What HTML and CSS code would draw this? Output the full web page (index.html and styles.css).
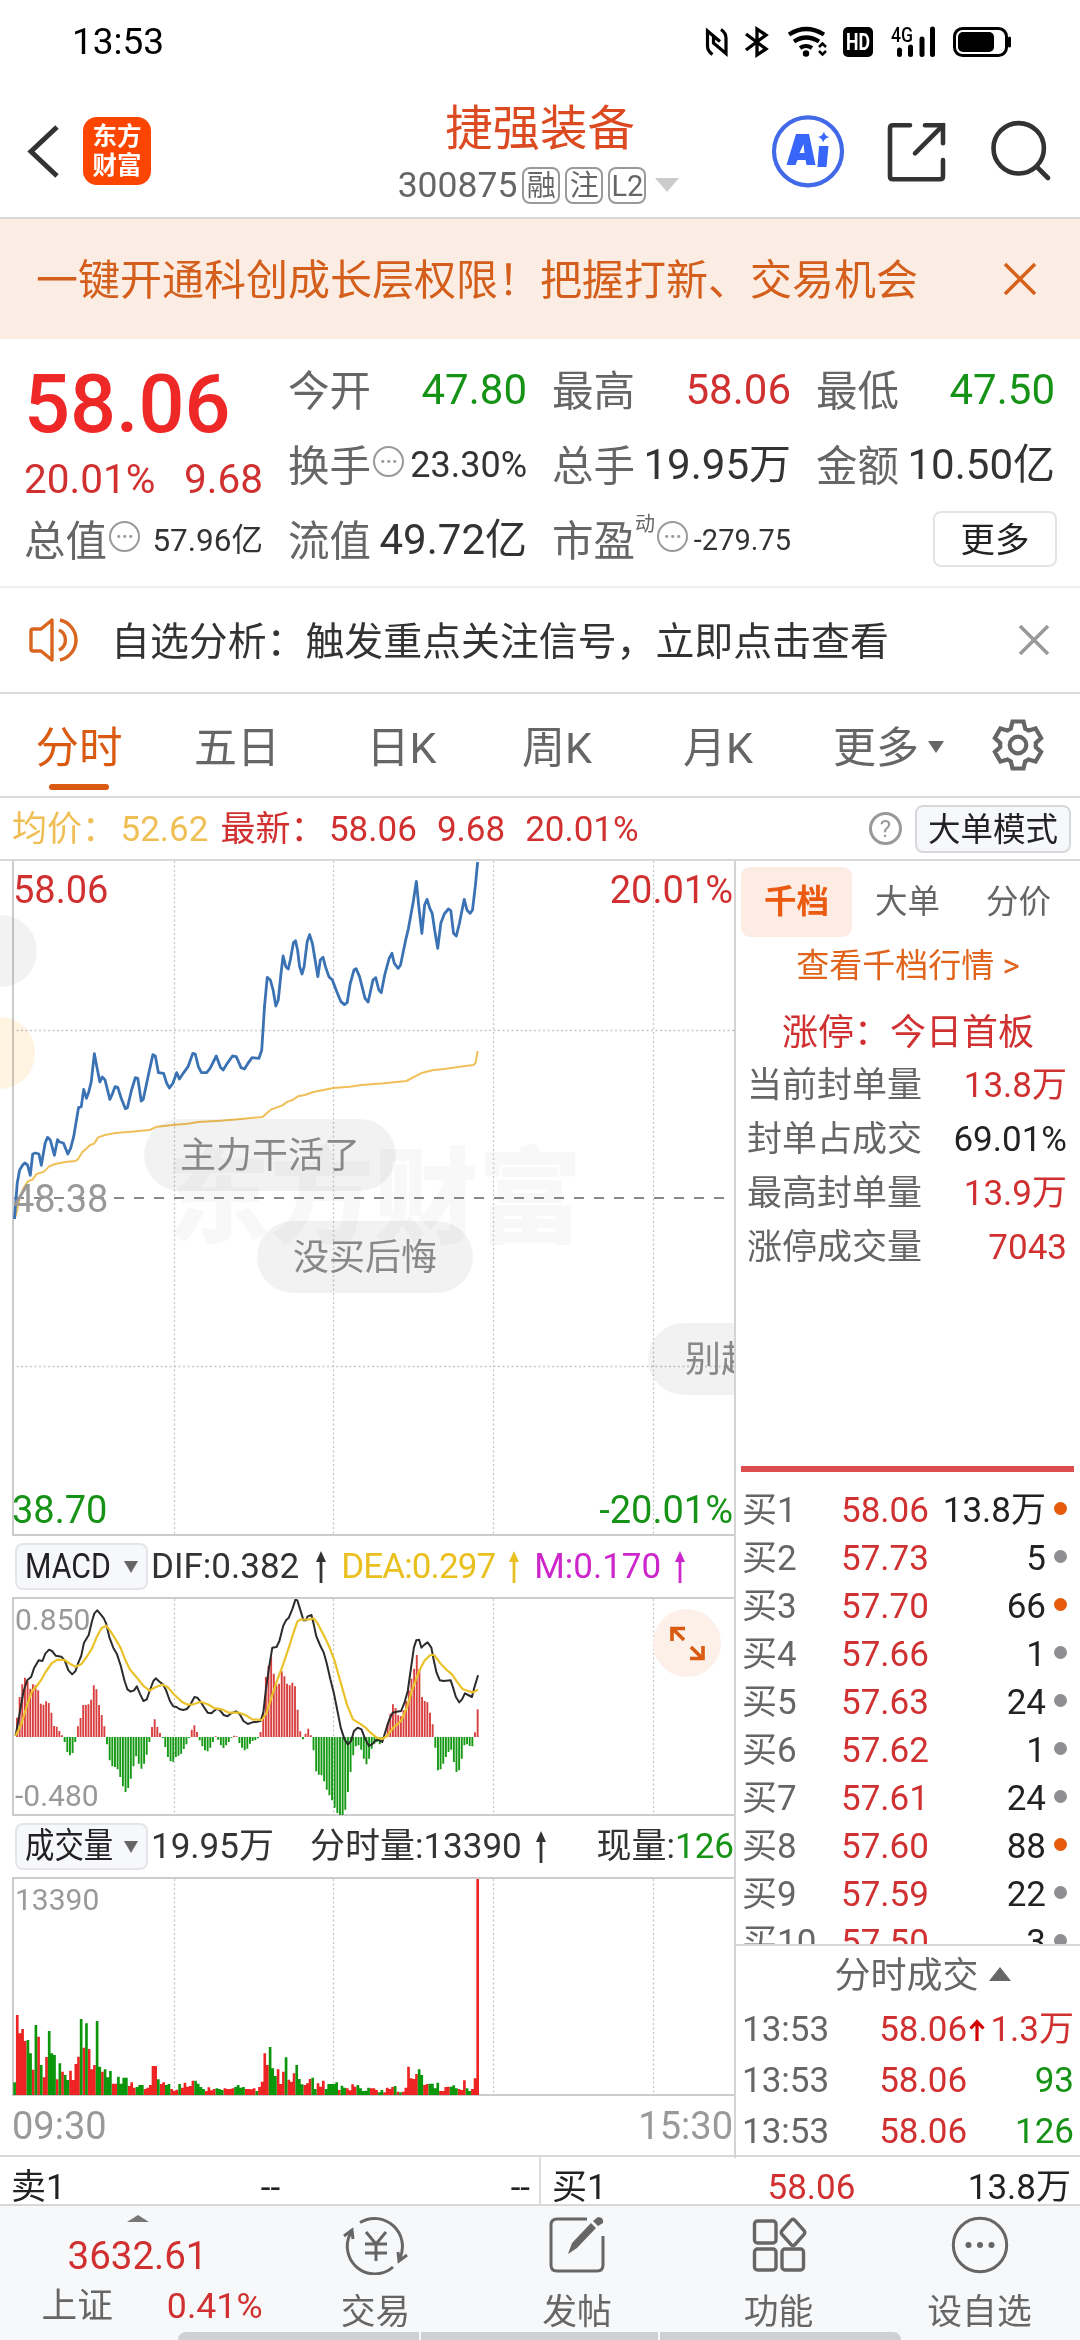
FILE: index.html
```html
<!DOCTYPE html>
<html lang="zh-CN">
<head>
<meta charset="utf-8">
<title>捷强装备 300875</title>
<link rel="stylesheet" href="styles.css">
</head>
<body>
<div class="app">
  <div class="status">
    <span class="clock">13:53</span>
    <svg class="status-icons" width="312" height="40" viewBox="700 22 312 40">
      <g fill="none" stroke="#000" stroke-width="4">
        <path d="M712.500 54.500Q707.500 51 707.500 46V31L720 41.500M721 29.500Q726 33 726 38V53.500L713.500 43V37" stroke-width="3.200"/>
        <path d="M746 34l20 15-9 6V29l9 6-20 15" stroke-width="3.300"/>
        <path d="M789 34.500q17-11 35 0" stroke-width="4.200"/>
        <path d="M794 41.500q12-8 25 0" stroke-width="4.200"/>
        <path d="M800 48q6-4 12 0" stroke-width="4"/>
        <path d="M819 47l3.500-3.500 3.500 3.500M819 51l3.500 3.500 3.500-3.500" stroke-width="2.500"/>
      </g>
      <circle cx="806" cy="53.500" r="3.200"/>
      <rect x="843" y="27" width="30" height="30" rx="5"/>
      <text x="858" y="50" class="hd" textLength="24" lengthAdjust="spacingAndGlyphs">HD</text>
      <text x="891" y="42" class="g4" textLength="22" lengthAdjust="spacingAndGlyphs">4G</text>
      <path d="M899.500 50v4.500M910.500 47v7.500M922 39v15.500M932.500 29v25.500" stroke="#000" stroke-width="5" stroke-linecap="round"/>
      <rect x="954.500" y="28.500" width="52" height="27" rx="8" fill="none" stroke="#000" stroke-width="3"/>
      <rect x="958" y="32" width="36" height="20" rx="5"/>
      <path d="M1009.500 38v8" stroke="#000" stroke-width="3" stroke-linecap="round"/>
    </svg>
  </div>

  <header class="header">
    <div class="head-left">
      <svg width="36" height="60" viewBox="25 121 36 60"><path d="M57 127L31 151.500 57 176" fill="none" stroke="#333" stroke-width="5"/></svg>
      <div class="logo">东方<br>财富</div>
    </div>
    <div class="head-mid">
      <h1 class="name">捷强装备</h1>
      <div class="code">300875<i class="tag">融</i><i class="tag">注</i><i class="tag">L2</i><b class="tri down pale"></b></div>
    </div>
    <svg class="head-right" width="282" height="80" viewBox="750 111 282 80">
      <circle cx="788" cy="151.300" r="34" fill="none" stroke="#4169e8" stroke-width="4.200"/>
      <path d="M776 134h13l6.500 31h-9l-1-5h-8l-2 5h-9zM779.500 153h5l-1-9zM799 146h9.500l-2 21h-9zM804 131.500q1 5 5.500 5.500-5 1-6.500 5.500-1-5-5.500-5.500 5-.5 6.500-5.500z" fill="#3866fb"/>
      <g fill="none" stroke="#333" stroke-width="4.600" stroke-linecap="round">
        <path d="M890 125.300h-17q-3 0-3 3v48q0 3 3 3h47q3 0 3-3V160M905 125.300h18v18M923 125.300l-28 28"/>
        <circle cx="998.700" cy="148.300" r="25.200"/>
        <path d="M1017 167l11 11"/>
      </g>
    </svg>
  </header>

  <div class="banner">
    <span>一键开通科创成长层权限！把握打新、交易机会</span>
    <svg width="34" height="34" viewBox="0 0 34 34"><path d="M2 2l30 30M32 2L2 32" stroke="#d9601a" stroke-width="3.500"/></svg>
  </div>

  <section class="quote">
    <div class="main-price">
      <strong>58.06</strong>
      <div class="change"><span>20.01%</span><span>9.68</span></div>
    </div>
    <div class="cell"><label>今开</label><span class="green">47.80</span></div>
    <div class="cell"><label>最高</label><span class="red">58.06</span></div>
    <div class="cell"><label>最低</label><span class="green">47.50</span></div>
    <div class="cell"><label>换手<i class="dots">•••</i></label><span class="s36">23.30%</span></div>
    <div class="cell"><label>总手</label><span>19.95万</span></div>
    <div class="cell"><label>金额</label><span>10.50亿</span></div>
    <div class="cell"><label>总值<i class="dots">•••</i></label><span class="s32">57.96亿</span></div>
    <div class="cell"><label>流值</label><span>49.72亿</span></div>
    <div class="cell"><label>市盈<sup>动</sup><i class="dots">•••</i></label><span class="s29">-279.75</span></div>
    <div class="cell end"><button class="more">更多</button></div>
  </section>

  <div class="notice">
    <svg width="52" height="46" viewBox="0 0 52 46"><g fill="none" stroke="#d9651f" stroke-width="3.400" stroke-linejoin="round"><path d="M2 14q0-2 2-2h8L23 3v40L12 34H4q-2 0-2-2zM30 13a11 11 0 0 1 0 20M31 3a20.500 20.500 0 0 1 0 40"/></g></svg>
    <span>自选分析：触发重点关注信号，立即点击查看</span>
    <svg width="32" height="32" viewBox="0 0 32 32"><path d="M2 2l28 28M30 2L2 30" stroke="#999" stroke-width="3.500"/></svg>
  </div>

  <nav class="tabs">
    <a class="on">分时</a><a>五日</a><a>日K</a><a>周K</a><a>月K</a><a>更多<b class="tri down"></b></a>
    <svg width="56" height="56" viewBox="-28 -28 56 56"><g fill="none" stroke="#666" stroke-width="4.200"><path d="M-5.500-23.500H5.500L7.200-16.400 10.600-14.400 17.600-16.500 23.100-7 17.800-2V2L23.100 7 17.600 16.500 10.600 14.400 7.200 16.400 5.500 23.500H-5.500L-7.200 16.400-10.600 14.400-17.600 16.500-23.100 7-17.800 2V-2L-23.100-7-17.600-16.500-10.600-14.400-7.200-16.400Z"/><circle r="8.300"/></g></svg>
  </nav>

  <div class="info">
    <span class="yellow">均价：<em>52.62</em></span><span class="red">最新：<em>58.06</em></span><span class="red">9.68</span><span class="red">20.01%</span>
    <i class="help">?</i><button class="mode">大单模式</button>
  </div>

  <main class="body">
    <section class="left">
      <div class="chart price">
        <span class="watermark">东方财富</span>
        <svg width="722" height="673" viewBox="0 0 722 673">
          <path class="grid" d="M162.500 0V673M321.500 0V673M481.500 0V673M641.500 0V673"/>
          <path class="grid" d="M0 169.500H722M0 505.500H722"/>
          <path d="M2 337H722" stroke="#888" stroke-width="2" stroke-dasharray="10 10"/>
          <g transform="translate(-12 -21) scale(.34439 .33333)" class="plot">
            <polyline stroke="#f0bf58" stroke-width="2" points="45,1130 50,1110 58,1070 68,1045 80,1025 95,1018 106,1002 128,995 142,980 160,972 190,966 218,963 226,958 240,935 262,915 273,911 285,892 305,885 335,879 380,875 435,870 455,860 510,854 545,851 575,846 640,842 700,837 762,831 788,808 820,796 835,785 850,780 865,769 885,765 910,756 968,744 1015,740 1050,735 1115,730 1180,723 1222,700 1255,691 1290,687 1345,679 1375,675 1381,668 1387,633"/>
            <polyline stroke="#3a72b4" stroke-width="2.800" points="42,1137 50,1030 57,990 66,975 72,969 80,975 88,1006 95,942 103,939 113,942 120,976 131,910 138,892 146,900 158,946 167,899 173,906 184,909 197,942 205,925 214,890 222,840 228,803 236,800 243,748 251,775 258,755 265,725 274,641 282,685 290,726 297,711 305,720 319,778 327,760 334,740 342,742 352,775 364,806 370,803 382,750 393,713 400,715 410,783 416,778 432,700 444,644 451,648 460,698 475,700 484,730 492,744 502,730 513,698 521,717 532,700 546,680 553,660 560,640 567,642 576,680 585,698 600,698 610,685 628,648 640,682 648,690 660,670 675,648 686,650 700,683 710,687 722,667 732,653 752,655 760,630 768,500 776,412 785,420 793,450 801,498 808,480 816,400 822,348 830,380 837,387 843,360 852,308 858,302 864,330 870,380 877,402 883,380 892,305 899,284 907,310 923,410 930,360 938,352 945,380 955,410 965,420 978,455 990,485 1000,494 1008,488 1017,430 1028,390 1034,386 1044,410 1060,475 1069,486 1083,420 1091,413 1100,450 1107,458 1117,405 1130,355 1138,340 1145,370 1156,385 1163,375 1178,300 1186,265 1200,185 1209,124 1216,200 1225,280 1233,195 1240,178 1248,205 1255,220 1262,270 1271,325 1280,250 1290,222 1302,207 1309,212 1317,280 1325,288 1334,250 1348,178 1356,210 1365,220 1372,210 1380,140 1387,66"/>
          </g>
        </svg>
        <span class="lab tl red">58.06</span><span class="lab tr red">20.01%</span>
        <span class="lab ml">48.38</span>
        <span class="lab bl green">38.70</span><span class="lab br green">-20.01%</span>
        <span class="bubble b1">主力干活了</span>
        <span class="bubble b2">没买后悔</span>
        <span class="bubble b3">别赶</span>
        <span class="bubble b4"></span><span class="bubble b5"></span>
      </div>

      <div class="ind">
        <button class="pick"><span>MACD</span><b class="tri down"></b></button>
        <span class="v1">DIF:0.382</span><svg class="arr" viewBox="0 0 12 32"><path d="M6 32V6" stroke="currentColor" stroke-width="2.800"/><path d="M6 0l5 11H1z" fill="currentColor"/></svg>
        <span class="v2">DEA:0.297</span><svg class="arr c-dea" viewBox="0 0 12 32"><path d="M6 32V6" stroke="currentColor" stroke-width="2.800"/><path d="M6 0l5 11H1z" fill="currentColor"/></svg>
        <span class="v3">M:0.170</span><svg class="arr c-m" viewBox="0 0 12 32"><path d="M6 32V6" stroke="currentColor" stroke-width="2.800"/><path d="M6 0l5 11H1z" fill="currentColor"/></svg>
      </div>
      <div class="chart sub">
        <span class="lab t30">0.850</span><span class="lab b30">-0.480</span>
        <svg width="722" height="216" viewBox="0 0 722 216">
          <path class="grid" d="M162.500 0V216M321.500 0V216M481.500 0V216M641.500 0V216"/>
          <path id="macd-up" stroke="#d84040" stroke-width="1.900"/>
          <path id="macd-down" stroke="#169a16" stroke-width="1.900"/>
          <g transform="translate(-12 -68) scale(.47194 .33333)" class="plot">
            <polyline stroke="#2c2c2c" stroke-width="2" points="33,615 40,560 50,480 58,447 66,438 72,412 82,388 90,390 96,368 104,356 110,360 118,374 130,377 137,388 145,418 153,430 160,420 166,395 172,375 178,335 188,312 195,270 200,247 206,238 212,248 220,262 225,278 232,320 240,350 248,370 256,405 264,450 270,475 277,482 284,478 290,466 297,490 304,510 311,505 317,480 325,450 330,442 338,452 345,460 352,478 360,510 367,526 374,528 380,534 388,537 396,534 404,520 412,498 418,500 425,512 432,528 440,545 448,547 455,538 460,533 466,538 474,552 482,556 490,547 500,541 508,550 516,570 525,579 535,574 545,572 552,570 558,545 563,480 570,410 577,350 586,348 592,330 600,285 606,268 612,260 620,232 626,206 630,208 636,235 643,268 648,268 652,256 660,252 664,275 670,315 678,342 686,365 692,395 700,445 708,490 715,540 722,590 730,625 737,640 744,630 750,600 758,590 766,595 774,625 782,645 790,638 798,625 804,628 810,633 817,600 825,565 832,545 840,542 850,540 857,515 864,480 870,420 877,350 882,328 888,326 893,350 900,340 906,334 914,350 918,380 925,425 932,448 940,450 955,448 960,470 966,498 973,514 979,505 985,487 992,492 1000,498 1005,470 1013,433"/>
            <polyline stroke="#eac22c" stroke-width="2.200" points="33,615 45,580 58,520 68,480 78,465 88,445 98,420 110,396 122,386 137,387 150,400 160,407 172,400 185,375 195,352 205,318 215,292 225,284 233,298 245,325 256,352 265,385 275,415 290,440 304,465 317,479 330,468 345,461 355,468 370,492 385,512 398,521 410,520 425,512 440,520 455,532 470,535 485,545 505,545 520,552 535,565 555,567 565,545 575,500 588,445 600,400 612,350 622,305 630,272 636,266 655,265 665,262 672,275 685,310 697,345 708,385 720,445 735,520 748,565 765,580 775,590 785,605 798,620 810,624 820,615 832,592 850,570 862,530 875,470 888,420 900,388 912,372 920,372 932,395 945,415 958,430 968,452 980,474 992,480 1003,484 1013,476"/>
          </g>
        </svg>
        <svg class="expand" width="68" height="68" viewBox="0 0 68 68"><circle cx="34" cy="34" r="34" fill="#fdf0e8"/><g fill="none" stroke="#d95a11" stroke-width="3.600"><path d="M19 32V19.500H32M20 20L31 31M50 37V49.500H37M49 49L38 38"/></g></svg>
      </div>

      <div class="ind vol">
        <button class="pick"><span>成交量</span><b class="tri down"></b></button>
        <span class="v1">19.95万</span>
        <span class="v4">分时量:13390</span><svg class="arr" viewBox="0 0 12 32"><path d="M6 32V6" stroke="currentColor" stroke-width="2.800"/><path d="M6 0l5 11H1z" fill="currentColor"/></svg>
        <span class="v5">现量:<em class="green">126</em></span>
      </div>
      <div class="chart sub">
        <span class="lab t30">13390</span>
        <svg width="722" height="216" viewBox="0 0 722 216">
          <path class="grid" d="M162.500 0V216M321.500 0V216M481.500 0V216M641.500 0V216"/>
          <path id="vol-up" stroke="#ee2424" stroke-width="2.660"/>
          <path id="vol-down" stroke="#0c960c" stroke-width="2.660"/>
        </svg>
      </div>
      <div class="times"><span>09:30</span><span>15:30</span></div>
    </section>

    <aside class="right">
      <div class="rtabs"><a class="on">千档</a><a>大单</a><a>分价</a></div>
      <div class="link">查看千档行情 &gt;</div>
      <div class="limit">涨停：今日首板</div>
      <div class="stat"><span>当前封单量</span><b class="red">13.8万</b></div>
      <div class="stat"><span>封单占成交</span><b>69.01%</b></div>
      <div class="stat"><span>最高封单量</span><b class="red">13.9万</b></div>
      <div class="stat"><span>涨停成交量</span><b class="red">7043</b></div>
      <div class="rule"></div>
      <div class="book">
        <div class="ord"><span>买1</span><span class="red">58.06</span><b>13.8万</b><i class="hot"></i></div>
        <div class="ord"><span>买2</span><span class="red">57.73</span><b>5</b><i></i></div>
        <div class="ord"><span>买3</span><span class="red">57.70</span><b>66</b><i class="hot"></i></div>
        <div class="ord"><span>买4</span><span class="red">57.66</span><b>1</b><i></i></div>
        <div class="ord"><span>买5</span><span class="red">57.63</span><b>24</b><i></i></div>
        <div class="ord"><span>买6</span><span class="red">57.62</span><b>1</b><i></i></div>
        <div class="ord"><span>买7</span><span class="red">57.61</span><b>24</b><i></i></div>
        <div class="ord"><span>买8</span><span class="red">57.60</span><b>88</b><i class="hot"></i></div>
        <div class="ord"><span>买9</span><span class="red">57.59</span><b>22</b><i></i></div>
        <div class="ord"><span>买10</span><span class="red">57.50</span><b>3</b><i></i></div>
      </div>
      <div class="deal-head">分时成交<b class="tri up"></b></div>
      <div class="deal"><span>13:53</span><span class="red">58.06</span><svg width="16" height="22" viewBox="0 0 16 22"><path d="M8 22V3M1.500 9.500L8 2.500l6.500 7" fill="none" stroke="#d40000" stroke-width="3.200"/></svg><b class="red">1.3万</b></div>
      <div class="deal"><span>13:53</span><span class="red">58.06</span><b class="green">93</b></div>
      <div class="deal"><span>13:53</span><span class="red">58.06</span><b class="green">126</b></div>
    </aside>
  </main>

  <div class="best">
    <div><span>卖1</span><span>--</span><span>--</span></div>
    <div><span>买1</span><span class="red">58.06</span><span>13.8万</span></div>
  </div>

  <footer class="bottom">
    <div class="index">
      <b class="tri up"></b>
      <span class="pts">3632.61</span>
      <div class="idx"><span>上证</span><span class="red">0.41%</span></div>
    </div>
    <a><svg width="68" height="60" viewBox="-34 -30 68 60"><g fill="none" stroke="#666" stroke-width="3"><path d="M-16-22.500A28 28 0 0 1 23.500 14M17 22A27.500 27.500 0 0 1-24-14M-32-9l8-6 1 9M31 10l-8 6-1-9"/><path d="M-10-13L0-1 10-13M0-1V16M-11-1H11M-11 8H11"/></g></svg>交易</a>
    <a><svg width="60" height="60" viewBox="-30 -30 60 60"><path d="M10-26H-20Q-26-26-26-20V20Q-26 26-20 26H20Q26 26 26 20V-9" fill="none" stroke="#666" stroke-width="3"/><path d="M-9 9L-5-2 14-22 19-17 0 3zM16-24L21-28Q27-28 26-22L21-19z" fill="#666"/></svg>发帖</a>
    <a><svg width="60" height="60" viewBox="-30 -30 60 60"><g fill="none" stroke="#666" stroke-width="3.400"><rect x="-24.500" y="-24" width="21.500" height="22" rx="3"/><rect x="-24.500" y="4" width="21.500" height="21" rx="3"/><rect x="3" y="4" width="21.500" height="21" rx="3"/><path d="M12-24.500Q14-27 16-24.500L25-14.500Q26.500-12.500 25-10.500L16-.5Q14 1.500 12-.5L3-10.500Q1.500-12.500 3-14.500Z"/></g></svg>功能</a>
    <a><svg width="60" height="60" viewBox="-30 -30 60 60"><circle r="26.700" fill="none" stroke="#666" stroke-width="3"/><g fill="#666"><circle cx="-11.500" r="3"/><circle r="3"/><circle cx="11.500" r="3"/></g></svg>设自选</a>
    <div class="handle"><i></i><i></i><i></i></div>
  </footer>
</div>
<script src="charts.js"></script>
</body>
</html>
```
FILE: styles.css
```css
* { box-sizing: border-box; }
body { margin: 0; background: #fff; color: #333; font-family: Roboto, "Noto Sans CJK SC", sans-serif; line-height: 1.2; }
i, em { font-style: normal; }
button { font-family: inherit; padding: 0; margin: 0; color: #222; }
h1 { margin: 0; font-weight: 400; }
svg { display: block; flex: none; }
.app { width: 1080px; height: 2340px; overflow: hidden; display: flex; flex-direction: column; white-space: nowrap; }
.app > * { flex: none; }
.red { color: #d03030; }
.green { color: #169316; }
.yellow { color: #efbe55; }
.tri { display: inline-block; border: 7px solid transparent; border-bottom: 0; border-top: 12px solid #666; }
.tri.up { border-top: 0; border-bottom: 12px solid #666; }
.tri.pale { border-width: 14px 12px 0; border-top-color: #ccc; }

.status { height: 84px; padding: 0 68px 0 72px; display: flex; align-items: center; justify-content: space-between; }
.clock { font-size: 37px; color: #000; }
.hd { font: 700 23px Roboto, sans-serif; fill: #fff; text-anchor: middle; }
.g4 { font: 500 20px Roboto, sans-serif; }

.header { height: 135px; border-bottom: 2px solid #d8d8da; display: grid; grid-template-columns: 380px 320px 380px; }
.head-left { display: flex; gap: 23px; padding: 33px 0 0 25px; align-items: flex-start; }
.head-left svg { margin-top: 4px; }
.logo { width: 68px; height: 68px; border-radius: 14px; background: #fd4502; color: #fff; font-size: 24.500px; line-height: 29px; font-weight: 700; text-align: center; padding-top: 5px; margin-left: -1px; }
.head-mid { display: flex; flex-direction: column; align-items: center; padding-top: 15px; }
.name { font-size: 47.400px; line-height: 60px; color: #dc4a22; }
.code { display: flex; align-items: center; font-size: 35.500px; color: #666; height: 54px; margin-right: 3px; margin-top: -1px; }
.tag { width: 38px; height: 37px; border: 2px solid #999; border-radius: 8px; font-size: 29px; line-height: 34px; text-align: center; margin-left: 5px; }
.code .tri { margin-left: 9px; }
.head-right { margin: 27px 0 0 70px; }

.banner { height: 120px; background: #fcede4; color: #d45f1c; font-size: 42px; display: flex; align-items: center; justify-content: space-between; padding: 0 43px 0 36px; }
.banner span { margin-top: 5px; }

.quote { height: 249px; border-bottom: 2px solid #eee; padding: 14px 25px 0; display: grid; grid-template-columns: repeat(4, 238px); grid-template-rows: repeat(3, 75px); column-gap: 26px; }
.main-price { grid-row: 1 / 3; display: flex; flex-direction: column; color: #ee2727; }
.main-price strong { font-size: 81px; font-weight: 500; line-height: 103px; margin-left: -1px; }
.change { display: flex; justify-content: space-between; font-size: 40.500px; line-height: 46px; color: #d03030; margin-left: -1px; }
.cell { display: flex; align-items: center; justify-content: space-between; font-size: 42px; }
.cell label { color: #666; display: flex; align-items: center; font-size: 41.500px; margin: 2px 0 0 -1px; }
.cell.end { justify-content: flex-end; }
.dots { width: 31px; height: 31px; border: 2px solid #999; border-radius: 50%; color: #999; font-size: 11px; line-height: 27px; text-align: center; margin: -9px 0 0 2px; font-family: "DejaVu Sans", sans-serif; letter-spacing: -.5px; }
.cell sup { font-size: 20px; align-self: flex-start; line-height: 24px; margin-top: -5px; }
.s36 { font-size: 36px; } .s32 { font-size: 31.500px; } .s29 { font-size: 29px; }
.more { width: 124px; height: 56px; border: 2px solid #e4e4e4; border-radius: 8px; background: #fff; font-size: 34.500px; margin: -4px -2px 0 0; line-height: 54px; }

.notice { height: 106px; border-bottom: 2px solid #dadada; display: flex; align-items: center; font-size: 38.900px; padding: 0 30px 0 29px; }
.notice span { margin: 4px 0 0 30px; flex: 1; }

.tabs { height: 104px; border-bottom: 2px solid #dadada; display: grid; grid-template-columns: 158px 158px 171px 140px 182px 159px 100px; justify-items: center; font-size: 43px; color: #666; line-height: 109px; }
.tabs a { height: 102px; }
.tabs .on { color: #d95a11; position: relative; font-size: 43.500px; }
.tabs .on::after { content: ""; position: absolute; left: 50%; bottom: 6px; width: 60px; height: 6px; margin-left: -30px; border-radius: 3px; background: #d95a11; }
.tabs .tri { margin: 0 0 10px 9px; border-left-width: 8px; border-right-width: 8px; }
.tabs svg { margin-top: 23px; }

.info { height: 63px; border-bottom: 2px solid #d8d8d8; display: flex; align-items: center; font-size: 35px; padding: 2px 9px 0 12px; }
.info span { margin-right: 20px; }
.info span:first-child { margin-right: 12px; }
.info em { margin-left: 3.500px; }
.help { margin: -2px 13px 0 auto; width: 33px; height: 33px; border: 3px solid #999; border-radius: 50%; color: #999; font-size: 24px; line-height: 28px; text-align: center; }
.mode { width: 156px; height: 48px; border: 2px solid #d6d8dc; border-radius: 8px; background: #f7f8fb; font-size: 32.500px; line-height: 46px; margin-top: -2px; }

.body { height: 1296px; border-bottom: 2px solid #d8d8d8; display: grid; grid-template-columns: 736px 344px; }
.left { padding-left: 12px; border-right: 2px solid #d4d4d4; min-width: 0; }
.chart { position: relative; border-left: 2px solid #ccc; border-bottom: 2px solid #ccc; }
.chart > svg { margin-left: -2px; }
.price { height: 675px; }
.price > svg { position: relative; }
.sub { height: 219px; border-top: 2px solid #ccc; }
.grid { stroke: #c8c8c8; stroke-width: 1.300; stroke-dasharray: 2 2.500; fill: none; }
.plot { fill: none; stroke-linejoin: round; }
.plot polyline { vector-effect: non-scaling-stroke; }
.lab { position: absolute; font-size: 38px; line-height: 44px; color: #999; }
.lab.red { color: #d03030; } .lab.green { color: #169316; }
.tl { left: -1px; top: 7px; } .tr { right: 1px; top: 7px; }
.ml { left: -1px; top: 316px; }
.bl { left: -2px; bottom: 2px; } .br { right: 1px; bottom: 2px; }
.t30, .b30 { font-size: 30px; line-height: 36px; left: 1px; }
.t30 { top: 3px; } .b30 { bottom: 0; }
.chart > .expand { position: absolute; left: 639px; top: 10px; margin: 0; }
.watermark { position: absolute; left: 152px; top: 264px; font-size: 104px; line-height: 150px; font-weight: 900; color: #f8f8f8; }
.bubble { position: absolute; height: 72px; border-radius: 36px; background: rgba(0,0,0,.05); color: #888; font-size: 36px; line-height: 74px; text-align: center; }
.b1 { left: 130px; top: 258px; width: 252px; }
.b2 { left: 243px; top: 360px; width: 216px; }
.b3 { left: 634px; top: 462px; width: 86px; padding-left: 37px; text-align: left; overflow: hidden; border-radius: 36px 0 0 36px; }
.b4 { left: -14px; top: 54px; width: 37px; border-radius: 0 36px 36px 0; }
.b5 { left: -14px; top: 156px; width: 35px; border-radius: 0 36px 36px 0; background: #fff4e2; z-index: 1; mix-blend-mode: multiply; }
.ind { height: 61px; display: flex; align-items: center; font-size: 35px; padding: 0 0 0 3px; }
.pick { width: 133px; height: 47px; border: 2px solid #e3e5e9; border-radius: 8px; background: #f7f8fb; font-size: 35px; line-height: 43px; display: flex; align-items: center; padding-left: 8px; margin-right: 3px; flex: none; }
.pick span { width: 99px; flex: none; transform: scaleX(.865); transform-origin: 0 50%; text-align: left; }
.vol .pick span { transform: scaleX(.84); line-height: 45px; }
.pick .tri { flex: none; }
.arr { width: 12px; height: 32px; margin: 0 14px 0 13px; }
.v1 { margin-right: 3px; }
.v2 { letter-spacing: -.9px; }
.v2, .c-dea { color: #eac020; }
.v3, .c-m { color: #cc26cc; }
.v4 { margin-left: 33px; }
.v5 { margin-left: auto; }
.times { display: flex; justify-content: space-between; font-size: 38px; color: #999; line-height: 60px; padding-right: 1px; }

.right { min-width: 0; display: flex; flex-direction: column; color: #666; font-size: 35px; }
.right > * { flex: none; }
.right b { font-weight: 400; color: #222; }
.right b.red { color: #d03030; } .right b.green { color: #169316; }
.rtabs { display: grid; grid-template-columns: repeat(3, 111px); margin: 6px 0 0 5px; font-size: 32.500px; line-height: 70px; height: 66px; text-align: center; }
.rtabs .on { background: #fdece4; color: #ea5a10; font-weight: 700; border-radius: 9px; }
.link { color: #e0641c; font-size: 33px; text-align: center; line-height: 66px; }
.limit { color: #d03030; font-size: 36px; line-height: 68px; text-align: center; margin-bottom: -8px; }
.stat { height: 54px; display: flex; justify-content: space-between; align-items: center; padding: 0 13px 0 11px; }
.rule { height: 6px; background: #dc4e4e; margin: 191px 6px 0 5px; }
.book { height: 474px; overflow: hidden; padding-top: 15px; border-bottom: 2px solid #d8d8d8; }
.ord { height: 48px; display: grid; grid-template-columns: 99px 90px 115px 14px; align-items: center; padding-left: 6px; }
.ord b { text-align: right; }
.ord i { width: 13px; height: 13px; border-radius: 50%; background: #8e8e93; margin: -5px 0 0 8px; }
.ord .hot { background: #e65a0a; }
.deal-head { height: 58px; line-height: 60px; font-size: 36px; text-align: center; padding-left: 29px; }
.deal-head .tri { margin: 0 0 7px 10px; border-width: 0 11px 14px; }
.deal { height: 51.200px; display: flex; align-items: center; padding: 0 6px 0 6px; }
.deal span:nth-child(2) { margin-left: 50px; }
.deal svg { margin-left: 2px; }
.deal b { margin-left: auto; }

.best { height: 49px; border-bottom: 2px solid #d8d8d8; display: grid; grid-template-columns: 541px 539px; font-size: 35px; line-height: 61px; color: #222; }
.best div { display: grid; grid-template-columns: 1fr auto 1fr; padding: 0 9px 0 11px; height: 47px; }
.best div:first-child { border-right: 2px solid #ddd; }
.best span:last-child { text-align: right; }

.bottom { height: 135px; background: #f7f8fa; position: relative; display: grid; grid-template-columns: 275px 201px 202px 201px 201px; color: #666; }
.bottom a { display: flex; flex-direction: column; align-items: center; font-size: 34.800px; line-height: 50px; padding-top: 9px; gap: 12px; }
.index { display: flex; flex-direction: column; align-items: center; padding-top: 9px; }
.index .tri { border-width: 0 11px 7px; border-bottom-color: #777; }
.pts { color: #d03030; font-size: 38.500px; line-height: 50px; margin-top: 9px; }
.idx { display: flex; gap: 54px; font-size: 35.700px; line-height: 50px; padding-left: 29px; }
.handle { position: absolute; left: 178px; bottom: 0; width: 723px; height: 9px; display: grid; grid-template-columns: 241px 237px 241px; gap: 2px; border-radius: 8px 8px 0 0; overflow: hidden; }
.handle i { background: #cfd0d3; }
```
FILE: charts.js
```js
// Histogram data, one entry per minute from 09:30 to 13:53.
var macd = [58,120,158,178,167,145,158,155,140,100,97,107,102,73,33,31,18,5,-15,-45,-55,-48,-15,32,57,96,96,98,112,155,143,96,66,32,-22,-70,-88,-90,-97,-120,-148,-165,-153,-125,-88,-58,-80,-95,-80,-53,-15,30,53,30,12,-3,-30,-60,-73,-74,-60,-56,-50,-36,-22,-3,22,35,15,-10,-28,-40,-43,-32,-15,2,-8,-25,-33,-25,-15,-2,4,2,-18,-32,-40,-35,-20,-12,-9,-4,15,75,180,213,240,190,155,160,197,182,160,155,163,152,82,17,-7,10,25,5,-40,-103,-113,-115,-133,-158,-175,-190,-212,-228,-234,-234,-218,-165,-105,-55,-28,-25,-38,-65,-82,-65,-35,-20,-15,-22,-12,3,40,70,98,87,65,62,80,108,140,175,205,246,203,120,108,104,73,38,-32,-100,-97,-80,-60,-45,-38,-75,-105,-100,-65,-25,-22,-27,-28,14,83];
// Positive: traded on an up tick, negative: on a down tick.
var volume = [-38,240,185,198,162,-165,-125,76,-210,175,-90,53,114,-192,-125,-120,47,-95,70,-60,-45,73,45,93,115,-228,142,-215,138,77,90,-222,-85,70,-77,-53,-72,34,34,-55,-34,-52,-52,27,38,22,-24,-30,-30,18,22,30,87,87,-47,33,38,-30,-33,18,13,16,-33,22,37,25,27,43,-43,-34,-24,-18,12,23,14,18,-20,-18,-15,20,18,18,20,-24,-30,-22,-24,18,18,17,20,-12,24,40,125,90,-144,-80,-57,77,33,70,-113,46,40,65,-90,-48,-32,30,35,48,-52,-18,35,25,43,-18,-33,-33,-33,-38,15,-28,-22,20,14,32,25,-30,-20,-12,-13,-22,20,20,15,-8,-15,8,22,18,24,-27,10,-8,10,22,85,50,48,63,-77,-60,30,33,-34,-34,-20,-37,12,12,24,25,-25,-29,-20,18,15,44,-20,-12,18,50,648];

function bars(data, x0, step, base, signed) {
  var out = { up: "", down: "" };
  data.forEach(function (v, i) {
    var h = (signed ? v : Math.abs(v)) / 3;
    out[v > 0 ? "up" : "down"] += "M" + (x0 + step * i).toFixed(2) + " " + base + "v" + (-h).toFixed(2);
  });
  return out;
}
var m = bars(macd, 5, 2.6475, 138, true);
document.getElementById("macd-up").setAttribute("d", m.up);
document.getElementById("macd-down").setAttribute("d", m.down);
var v = bars(volume, 2.6, 2.6615, 216, false);
document.getElementById("vol-up").setAttribute("d", v.up);
document.getElementById("vol-down").setAttribute("d", v.down);
```
